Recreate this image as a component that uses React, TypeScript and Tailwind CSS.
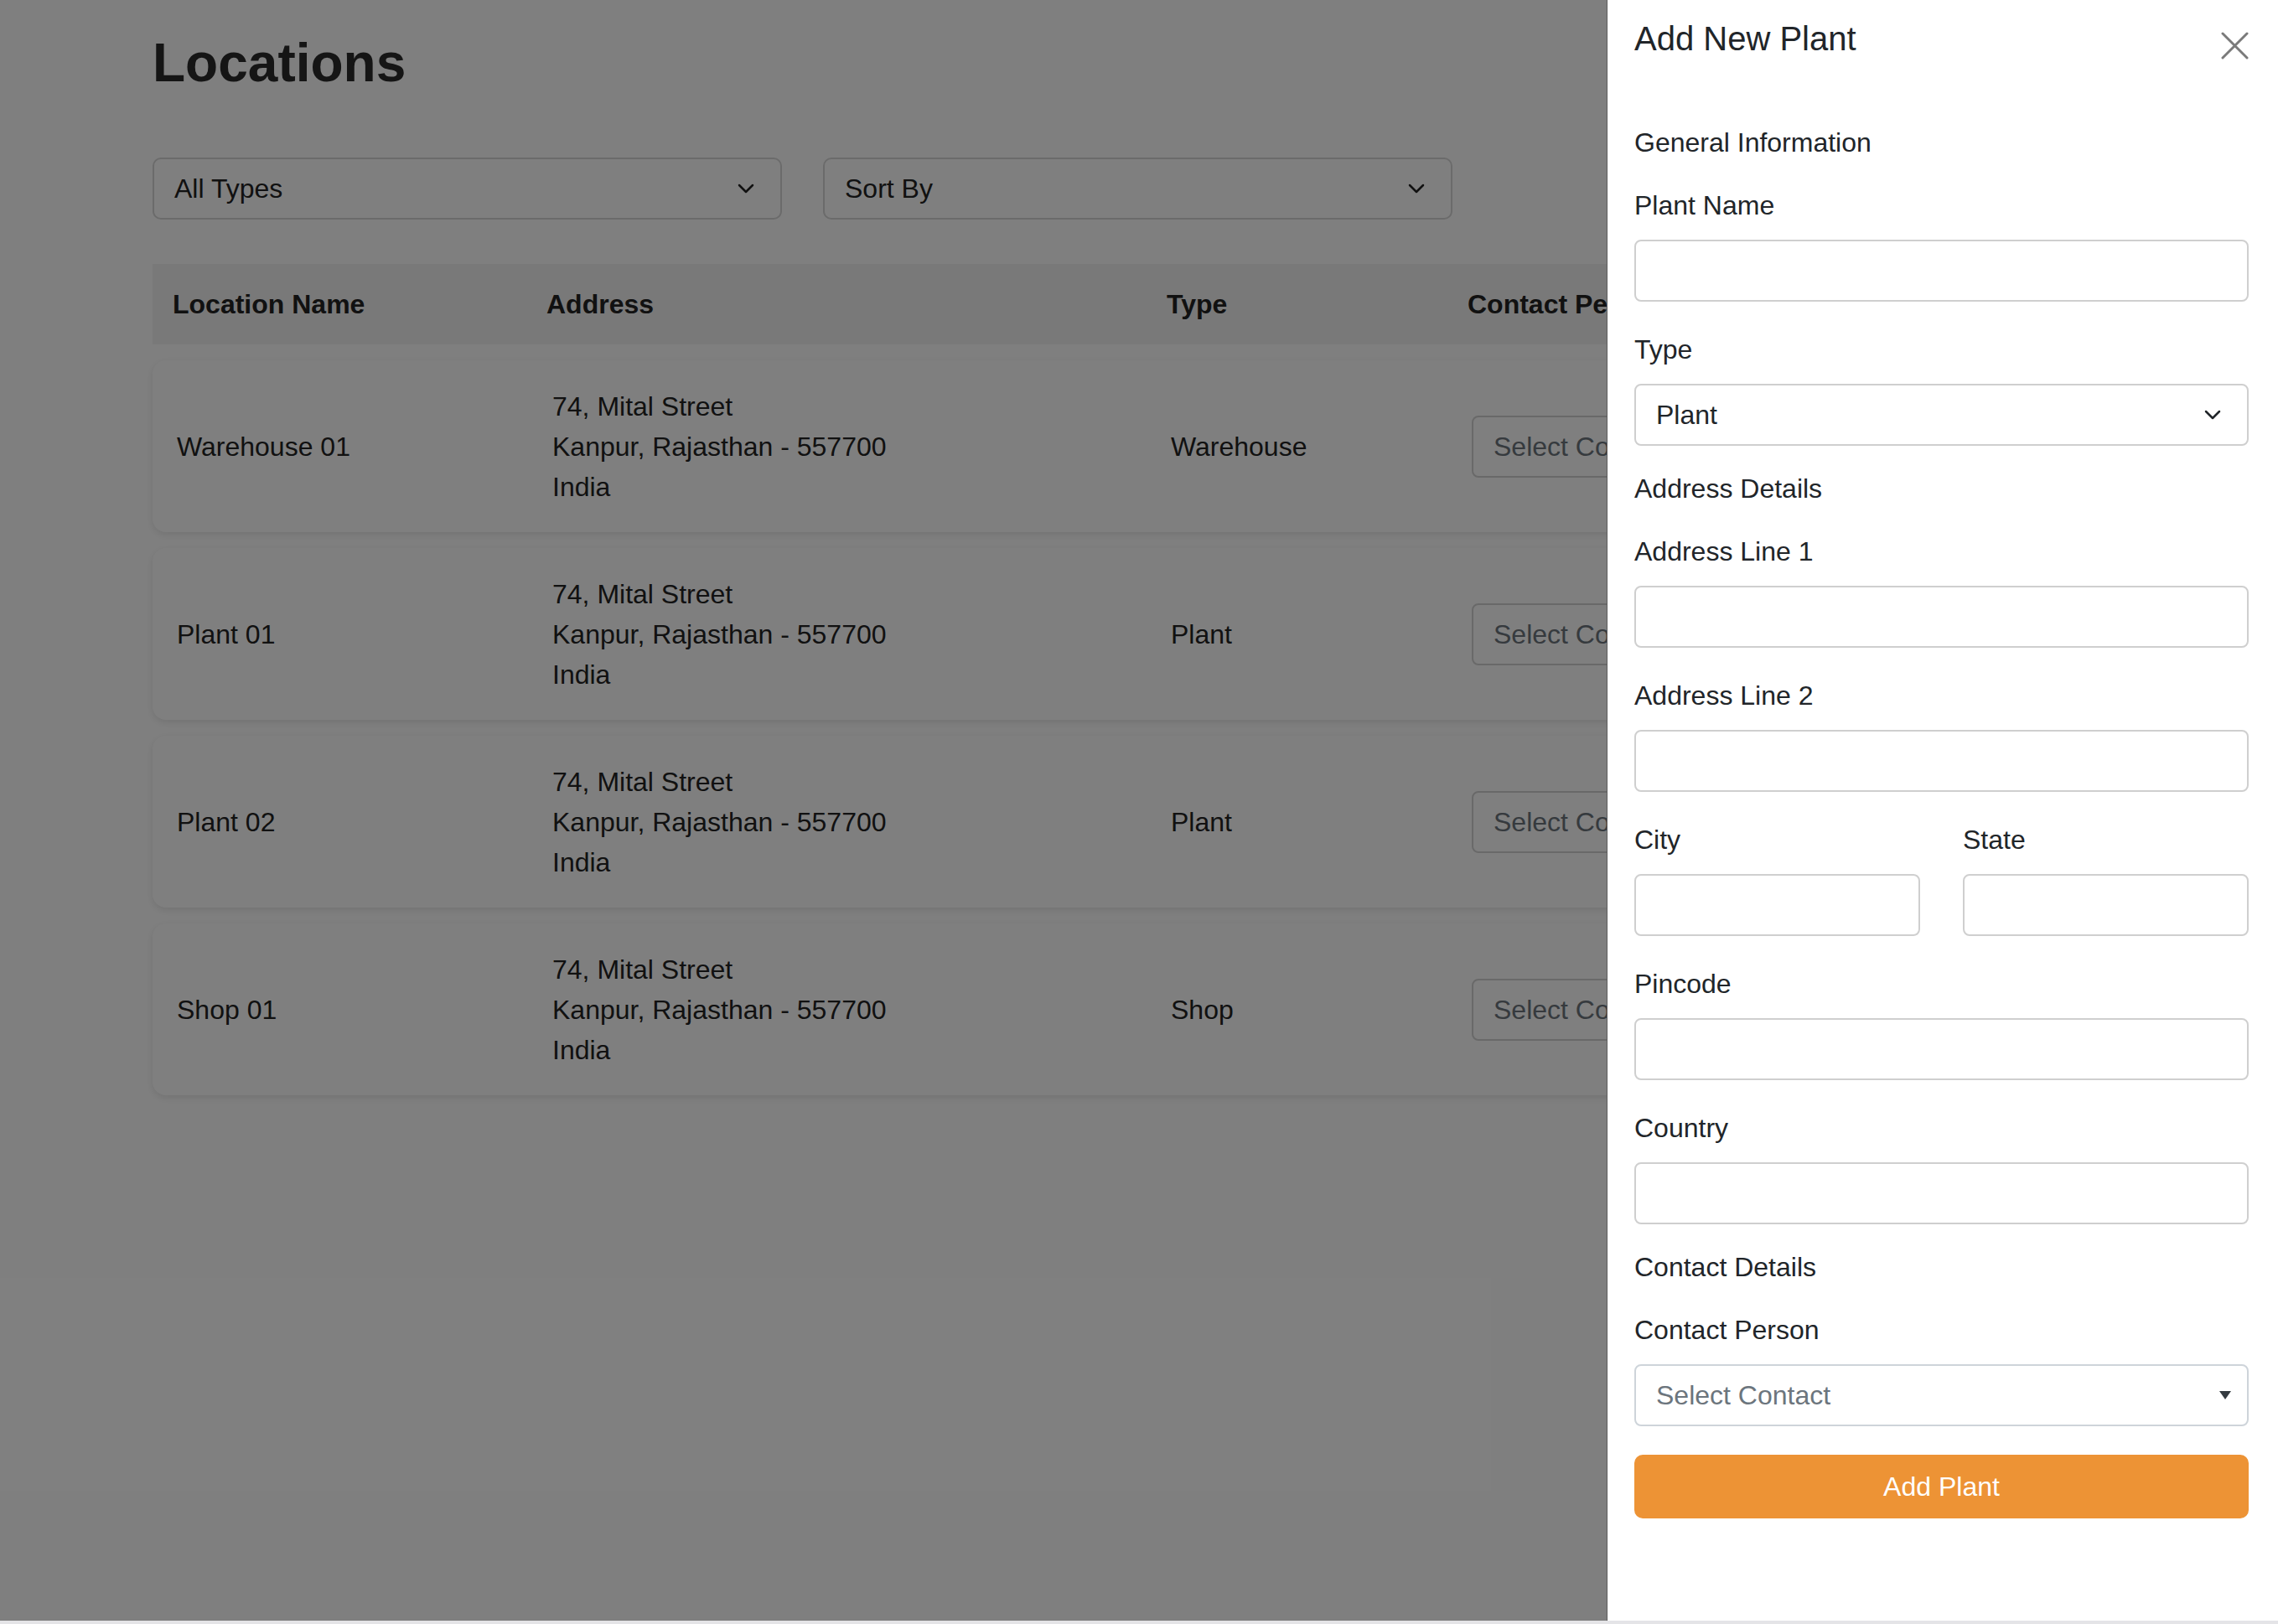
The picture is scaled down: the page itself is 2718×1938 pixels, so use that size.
import React from 'react';

const locations = [
  { name: 'Warehouse 01', type: 'Warehouse' },
  { name: 'Plant 01', type: 'Plant' },
  { name: 'Plant 02', type: 'Plant' },
  { name: 'Shop 01', type: 'Shop' },
];

const Chevron = () => (
  <svg width="20" height="12" viewBox="0 0 20 12" fill="none">
    <path d="M2 2 L10 10 L18 2" stroke="currentColor" strokeWidth="2.5" strokeLinecap="round" strokeLinejoin="round" />
  </svg>
);

const FilterSelect = ({ label }: { label: string }) => (
  <div className="w-[751px] h-[74px] flex items-center justify-between pl-[24px] pr-[31px] border-2 border-[#d6d6d6] rounded-[10px] text-[32px] text-[#222]">
    <span>{label}</span>
    <Chevron />
  </div>
);

const Field = ({ label, children }: { label: string; children?: React.ReactNode }) => (
  <div className="flex flex-col">
    <label className="text-[32px] leading-[48px] text-[#212529]">{label}</label>
    <div className="mt-[17px]">
      {children ?? <div className="h-[74px] border-2 border-[#cfcfcf] rounded-[8px] bg-white" />}
    </div>
  </div>
);

const Section = ({ title, children }: { title: string; children: React.ReactNode }) => (
  <div className="flex flex-col">
    <h3 className="text-[32px] leading-[48px] text-[#212529]">{title}</h3>
    <div className="mt-[27px] flex flex-col gap-[33px]">{children}</div>
  </div>
);

export default function App() {
  return (
    <div className="w-full font-['Liberation_Sans',Arial,sans-serif]">
      <div className="relative h-[1934px] overflow-hidden bg-white">
        {/* Page */}
        <main className="pl-[182px] pt-[37px] w-[2536px]">
          <h1 className="text-[64px] leading-[77px] font-bold text-[#2a2a2a]">Locations</h1>

          <div className="mt-[74px] flex gap-[49px]">
            <FilterSelect label="All Types" />
            <FilterSelect label="Sort By" />
          </div>

          <div className="mt-[53px]">
            <div className="grid grid-cols-[446px_740px_359px_1fr] h-[96px] items-center bg-[#f3f3f3] text-[32px] leading-[48px] font-bold text-[#222]">
              <div className="pl-[24px]">Location Name</div>
              <div className="pl-[24px]">Address</div>
              <div className="pl-[24px]">Type</div>
              <div className="pl-[24px]">Contact Person</div>
            </div>

            <div className="mt-[19px] flex flex-col gap-[19px]">
              {locations.map((loc) => (
                <div
                  key={loc.name}
                  className="grid grid-cols-[446px_740px_359px_1fr] h-[205px] items-center rounded-[16px] bg-white shadow-[0_3px_10px_rgba(0,0,0,0.1)] text-[32px] leading-[48px] text-[#222]"
                >
                  <div className="pl-[29px]">{loc.name}</div>
                  <div className="pl-[31px]">
                    <div>74, Mital Street</div>
                    <div>Kanpur, Rajasthan - 557700</div>
                    <div>India</div>
                  </div>
                  <div className="pl-[29px]">{loc.type}</div>
                  <div className="pl-[29px]">
                    <div className="w-[420px] h-[74px] flex items-center pl-[24px] border-2 border-[#d2d2d2] rounded-[8px] text-[#6c757d]">
                      Select Contact
                    </div>
                  </div>
                </div>
              ))}
            </div>
          </div>
        </main>

        {/* Backdrop */}
        <div className="absolute inset-0 bg-black/50" />

        {/* Drawer */}
        <aside className="absolute top-0 right-0 h-full w-[801px] bg-white border-l border-[#5e5e5e] pl-[32px] pr-[35px] pt-[22px]">
          <div className="flex items-start justify-between">
            <h2 className="text-[40px] leading-[48px] text-[#212529]">Add New Plant</h2>
            <button className="mt-[16px] text-[#7a7a7a]">
              <svg width="33" height="33" viewBox="0 0 33 33" fill="none">
                <path d="M2 2 L31 31 M31 2 L2 31" stroke="currentColor" strokeWidth="3" strokeLinecap="round" />
              </svg>
            </button>
          </div>

          <form className="mt-[75px] flex flex-col gap-[27px]">
            <Section title="General Information">
              <Field label="Plant Name" />
              <Field label="Type">
                <div className="h-[74px] flex items-center justify-between pl-[24px] pr-[31px] border-2 border-[#cfcfcf] rounded-[8px] text-[32px] text-[#212529]">
                  <span>Plant</span>
                  <Chevron />
                </div>
              </Field>
            </Section>

            <Section title="Address Details">
              <Field label="Address Line 1" />
              <Field label="Address Line 2" />
              <div className="grid grid-cols-2 gap-[51px]">
                <Field label="City" />
                <Field label="State" />
              </div>
              <Field label="Pincode" />
              <Field label="Country" />
            </Section>

            <Section title="Contact Details">
              <Field label="Contact Person">
                <div className="h-[74px] flex items-center justify-between pl-[24px] pr-[18px] border-2 border-[#ced4da] rounded-[8px] text-[32px] text-[#6c757d]">
                  <span>Select Contact</span>
                  <svg width="16" height="12" viewBox="0 0 16 12">
                    <path d="M1 1 H15 L8 11 Z" fill="#343a40" />
                  </svg>
                </div>
              </Field>
            </Section>
          </form>

          <button className="mt-[34px] w-full h-[76px] rounded-[10px] bg-[#ed9335] text-white text-[32px]">
            Add Plant
          </button>
        </aside>
      </div>
      <div className="h-[4px] bg-[#e4e4e7]" />
    </div>
  );
}
